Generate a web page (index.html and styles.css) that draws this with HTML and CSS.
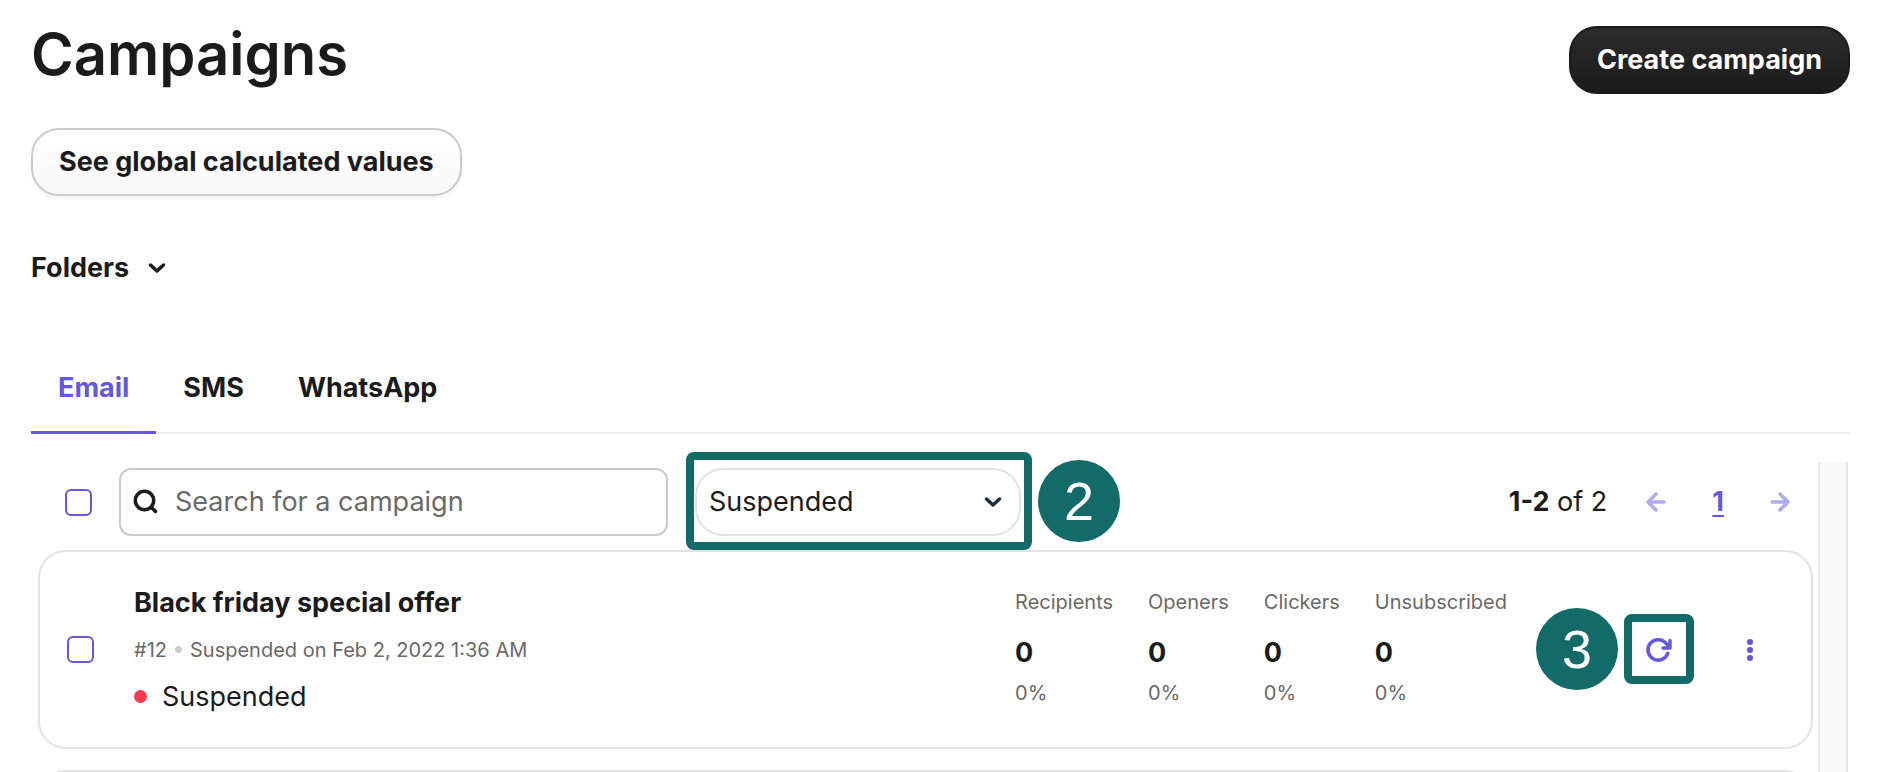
FILE: index.html
```html
<!DOCTYPE html>
<html lang="en">
<head>
<meta charset="utf-8">
<meta name="viewport" content="width=device-width, initial-scale=1">
<title>Campaigns</title>
<link rel="stylesheet" href="styles.css">
</head>
<body>
<main class="page">
  <header class="page-header">
    <h1 class="page-title">Campaigns</h1>
    <button class="btn btn-primary" type="button">Create campaign</button>
  </header>

  <button class="btn btn-secondary" type="button">See global calculated values</button>

  <button class="folders" type="button" aria-expanded="false">
    Folders
    <svg class="icon-chevron" viewBox="0 0 20 12" aria-hidden="true"><path d="M3.500 3l6.500 6 6.500-6"/></svg>
  </button>

  <nav class="tabs" aria-label="Channels">
    <a class="tab tab-active" href="#email" aria-current="page">Email</a>
    <a class="tab" href="#sms">SMS</a>
    <a class="tab" href="#whatsapp">WhatsApp</a>
  </nav>

  <section class="panel" id="email">
    <div class="panel-content">
      <div class="toolbar">
        <input class="checkbox" type="checkbox" aria-label="Select all campaigns">
        <label class="search">
          <svg class="icon-search" viewBox="0 0 26 26" aria-hidden="true"><circle cx="11.500" cy="11.500" r="9.200"/><path d="M18.500 18.500l4 4"/></svg>
          <input class="search-input" type="text" placeholder="Search for a campaign" aria-label="Search for a campaign">
        </label>
        <div class="filter callout">
          <select class="filter-select" aria-label="Status">
            <option>Suspended</option>
          </select>
          <svg class="icon-chevron filter-chevron" viewBox="0 0 20 12" aria-hidden="true"><path d="M3.500 3l6.500 6 6.500-6"/></svg>
          <span class="step step-after">2</span>
        </div>
        <div class="pagination">
          <span class="range"><strong>1-2</strong> of 2</span>
          <button class="pager" type="button" aria-label="Previous page" disabled>
            <svg class="icon-arrow" viewBox="0 0 24 24" aria-hidden="true"><path d="M20 12H4M12 4l-8 8 8 8"/></svg>
          </button>
          <a class="page-number" href="#page-1" aria-current="page">1</a>
          <button class="pager" type="button" aria-label="Next page" disabled>
            <svg class="icon-arrow" viewBox="0 0 24 24" aria-hidden="true"><path d="M4 12H20M12 4l8 8-8 8"/></svg>
          </button>
        </div>
      </div>

      <ul class="campaigns">
        <li class="card">
          <input class="checkbox" type="checkbox" aria-label="Select Black friday special offer">
          <div class="summary">
            <h2 class="campaign-name">Black friday special offer</h2>
            <p class="meta">#12 <span class="meta-dot"></span> Suspended on Feb 2, 2022 1:36 AM</p>
            <p class="status"><span class="status-dot"></span>Suspended</p>
          </div>
          <dl class="stats">
            <div class="stat"><dt>Recipients</dt><dd class="value">0</dd><dd class="rate">0%</dd></div>
            <div class="stat"><dt>Openers</dt><dd class="value">0</dd><dd class="rate">0%</dd></div>
            <div class="stat"><dt>Clickers</dt><dd class="value">0</dd><dd class="rate">0%</dd></div>
            <div class="stat"><dt>Unsubscribed</dt><dd class="value">0</dd><dd class="rate">0%</dd></div>
          </dl>
          <div class="actions">
            <div class="resume callout">
              <button class="icon-button" type="button" aria-label="Resume campaign">
                <svg class="icon-resume" viewBox="0 0 28 28" aria-hidden="true"><path d="M22.800 17.200A10.200 10.200 0 1 1 20.300 6.600L24.500 11M18 12H25V4.500"/></svg>
              </button>
              <span class="step step-before">3</span>
            </div>
            <button class="icon-button" type="button" aria-label="More actions">
              <svg class="icon-more" viewBox="0 0 8 24" aria-hidden="true"><circle cx="4" cy="4" r="3"/><circle cx="4" cy="12" r="3"/><circle cx="4" cy="20" r="3"/></svg>
            </button>
          </div>
        </li>
        <li class="card"></li>
      </ul>
    </div>
    <div class="scroll-track"></div>
  </section>
</main>
</body>
</html>
```

FILE: styles.css
```css
* {
  box-sizing: border-box;
  margin: 0;
  padding: 0;
}

html,
body {
  height: 100%;
}

body {
  background: #fff;
  color: #1b1b1b;
  font: 400 27px/36px Inter, sans-serif;
}

button,
input,
select {
  font: inherit;
  color: inherit;
}

button {
  border: 0;
  background: none;
}

svg {
  display: block;
  flex: none;
  fill: none;
  stroke: currentColor;
  stroke-width: 3.5;
  stroke-linecap: round;
  stroke-linejoin: round;
}

.page {
  display: flex;
  flex-direction: column;
  align-items: flex-start;
  height: 100%;
  padding: 26px 30px 0 31px;
}

.page-header {
  display: flex;
  justify-content: space-between;
  align-items: flex-start;
  width: 100%;
}

.page-title {
  font-size: 58px;
  line-height: 56px;
  font-weight: 600;
}

.btn {
  height: 68px;
  padding: 0 26px;
  border-radius: 28px;
  font-weight: 650;
}

.btn-primary {
  border: 2px solid #1b1b1b;
  background: linear-gradient(#2b2b2b, #1b1b1b);
  color: #fff;
}

.btn-secondary {
  margin-top: 34px;
  border: 2px solid #cbcbcb;
  background: linear-gradient(#fff, #f9f9f9);
  box-shadow: 0 2px 4px #0000000f;
}

.folders {
  display: flex;
  align-items: center;
  gap: 18px;
  margin-top: 54px;
  font-weight: 650;
}

.icon-chevron {
  width: 20px;
  height: 12px;
}

.tabs {
  display: flex;
  width: 100%;
  margin-top: 68px;
  border-bottom: 2px solid #efefef;
}

.tab {
  height: 80px;
  padding: 16px 27px 0;
  margin-bottom: -2px;
  color: inherit;
  font-weight: 650;
  text-decoration: none;
}

.tab-active {
  border-bottom: 3px solid #6358de;
  color: #6358de;
}

.panel {
  display: flex;
  flex: 1;
  gap: 5px;
  width: 100%;
  min-height: 0;
  margin-top: 18px;
  padding-right: 2px;
  overflow: hidden;
}

.panel-content {
  flex: 1;
  min-width: 0;
  padding: 16px 0 0 7px;
}

.scroll-track {
  width: 30px;
  margin-top: 10px;
  border: solid #e8e8e8;
  border-width: 0 2px;
  background: #fafafa;
}

.toolbar {
  display: flex;
  align-items: center;
  padding: 0 21px 0 27px;
}

.checkbox {
  appearance: none;
  flex: none;
  width: 27px;
  height: 27px;
  border: 2px solid #6358de;
  border-radius: 6px;
  background: #fff;
}

.search {
  display: flex;
  align-items: center;
  gap: 16px;
  width: 549px;
  height: 68px;
  margin-left: 27px;
  padding: 0 12px;
  border: 2px solid #cbcbcb;
  border-radius: 12px;
}

.icon-search {
  width: 26px;
  height: 26px;
}

.search-input {
  flex: 1;
  min-width: 0;
  border: 0;
  outline: 0;
  background: none;
}

.search-input::placeholder {
  color: #696969;
  opacity: 1;
}

.callout {
  position: relative;
}

.callout::before {
  content: "";
  position: absolute;
  border: 8px solid #126b69;
  border-radius: 8px;
  pointer-events: none;
}

.filter::before {
  inset: -16px -11px -14px -9px;
}

.resume::before {
  inset: -16px -15px -14px;
}

.step {
  position: absolute;
  display: grid;
  place-items: center;
  width: 82px;
  height: 82px;
  border-radius: 50%;
  background: #126b69;
  color: #fff;
  font-family: "Liberation Sans", Arial, sans-serif;
  font-size: 54px;
  line-height: 54px;
}

.step-after {
  top: -8px;
  left: calc(100% + 17px);
}

.step-before {
  top: -22px;
  right: calc(100% + 21px);
}

.filter {
  width: 326px;
  margin-left: 27px;
}

.filter-select {
  appearance: none;
  display: block;
  width: 100%;
  height: 68px;
  padding: 0 60px 0 12px;
  border: 2px solid #e3e3e3;
  border-radius: 28px;
  background: #fff;
}

.filter-chevron {
  position: absolute;
  top: 28px;
  right: 18px;
  color: #1f2d3d;
  pointer-events: none;
}

.pagination {
  display: flex;
  align-items: center;
  margin-left: auto;
}

.range {
  margin-right: 37px;
}

.range strong {
  font-weight: 700;
}

.pager {
  width: 24px;
  height: 24px;
  color: #b1abef;
}

.page-number {
  margin: 0 44px;
  color: #6358de;
  font-weight: 650;
  text-underline-offset: 4px;
  text-decoration-thickness: 2px;
}

.icon-arrow {
  width: 24px;
  height: 24px;
}

.campaigns {
  display: flex;
  flex-direction: column;
  gap: 21px;
  margin-top: 14px;
  list-style: none;
}

.card {
  display: flex;
  align-items: center;
  min-height: 199px;
  padding: 0 41px 0 27px;
  border: 2px solid #e3e3e3;
  border-radius: 28px;
}

.summary {
  display: flex;
  flex-direction: column;
  gap: 17px;
  margin-left: 40px;
}

.campaign-name {
  font-size: 27px;
  line-height: 36px;
  font-weight: 700;
}

.meta {
  display: flex;
  align-items: center;
  gap: 8px;
  color: #696969;
  font-size: 20px;
  line-height: 24px;
}

.meta-dot {
  width: 7px;
  height: 7px;
  border-radius: 50%;
  background: #cbcbcb;
}

.status {
  display: flex;
  align-items: center;
  gap: 15px;
}

.status-dot {
  width: 13px;
  height: 13px;
  border-radius: 50%;
  background: #ff3a50;
}

.stats {
  display: flex;
  gap: 35px;
  margin-left: auto;
  padding-bottom: 5px;
}

.stat dt,
.rate {
  color: #696969;
  font-size: 20px;
  line-height: 24px;
}

.value {
  margin: 21px 0 10px;
  font-weight: 700;
}

.actions {
  display: flex;
  gap: 51px;
  margin-left: 132px;
}

.icon-button {
  display: grid;
  place-items: center;
  width: 40px;
  height: 40px;
  color: #6358de;
}

.icon-resume {
  width: 28px;
  height: 28px;
}

.icon-more {
  width: 8px;
  height: 24px;
  fill: currentColor;
  stroke: none;
}
```
